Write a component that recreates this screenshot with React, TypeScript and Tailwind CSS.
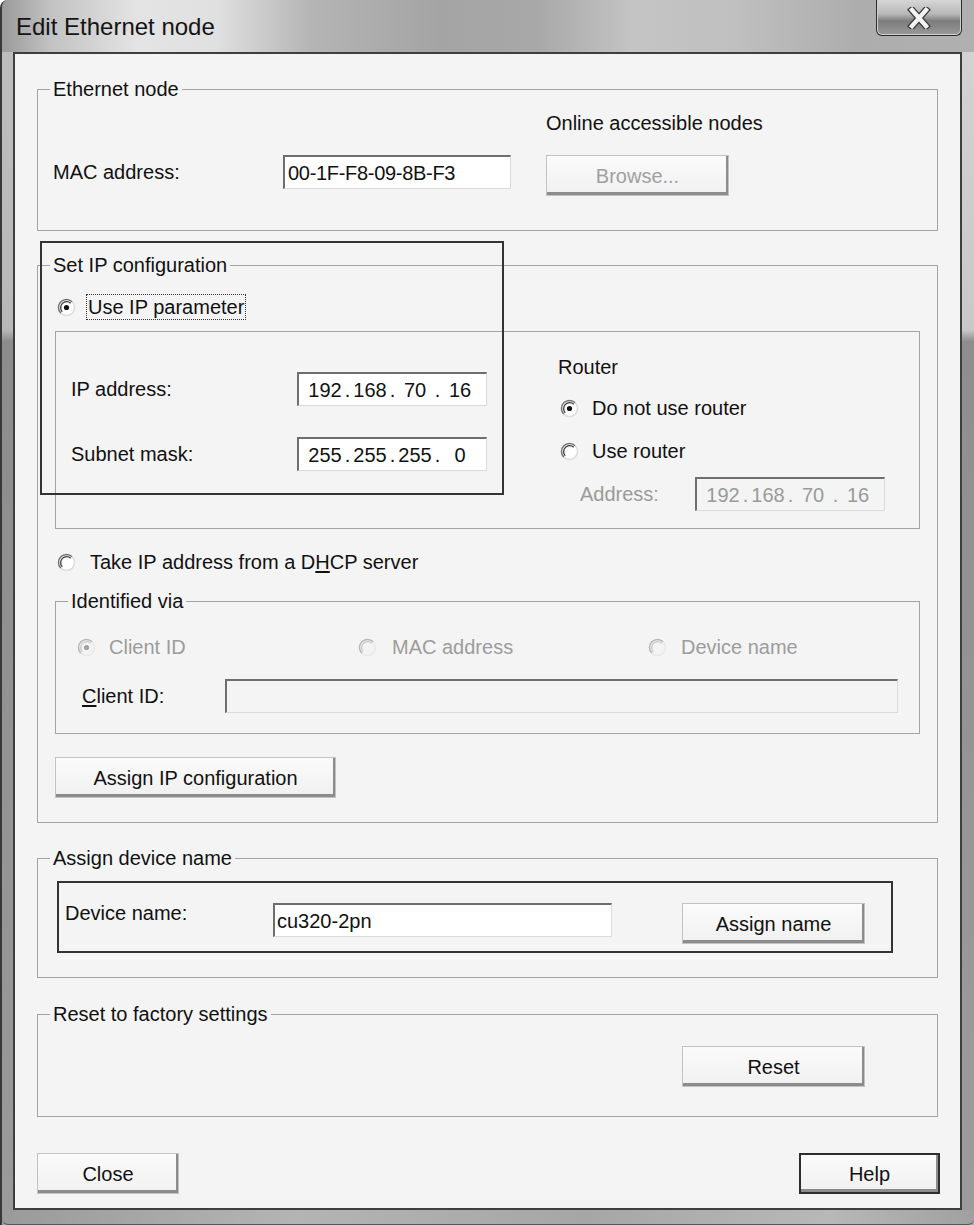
import React from 'react';

// Classic Windows dialog: Edit Ethernet node

type Kids = { children?: React.ReactNode; className?: string };

function Radio({ checked = false, disabled = false }: { checked?: boolean; disabled?: boolean }) {
  const dark = disabled ? '#b6b6b6' : '#707070';
  const darker = disabled ? '#c9c9c9' : '#3a3a3a';
  const light = disabled ? '#e8e8e8' : '#dcdcdc';
  return (
    <svg width="19" height="19" viewBox="0 0 19 19" className="shrink-0">
      <circle cx="9.5" cy="9.5" r="8" fill={disabled ? '#f3f3f3' : '#ffffff'} />
      <path d="M3.84 15.16A8 8 0 0 1 15.16 3.84" fill="none" stroke={dark} strokeWidth="1.5" />
      <path d="M15.16 3.84A8 8 0 0 1 3.84 15.16" fill="none" stroke={light} strokeWidth="1.5" />
      <path d="M5.26 13.74A6 6 0 0 1 13.74 5.26" fill="none" stroke={darker} strokeWidth="1.3" />
      {checked && <circle cx="9.5" cy="9.5" r="2.6" fill={disabled ? '#a2a2a2' : '#111111'} />}
    </svg>
  );
}

function Field({ children, className = '', disabled = false }: Kids & { disabled?: boolean }) {
  return (
    <div
      className={`flex items-center h-[34px] border-t-2 border-l-2 border-r border-b border-t-[#6e6e6e] border-l-[#6e6e6e] border-r-[#dadada] border-b-[#dadada] ${
        disabled ? 'bg-[#f4f4f4] text-[#9a9a9a]' : 'bg-white'
      } ${className}`}
    >
      {children}
    </div>
  );
}

function Ip({ parts }: { parts: string[] }) {
  return (
    <div className="flex items-center pl-[7px]">
      {parts.map((p, i) => (
        <React.Fragment key={i}>
          <span className="w-[38px] text-center">{p}</span>
          {i < 3 && <span className="w-[7px] text-center">.</span>}
        </React.Fragment>
      ))}
    </div>
  );
}

function Btn({ children, className = '', disabled = false, isDefault = false }: Kids & { disabled?: boolean; isDefault?: boolean }) {
  return (
    <div
      className={`flex items-center justify-center h-[41px] bg-[linear-gradient(to_bottom,#fbfbfb,#f0f0f0)] shadow-[inset_-2px_-3px_0_#8c8c8c] ${
        isDefault ? 'border-2 border-[#2e2e2e]' : 'border border-[#c2c2c2]'
      } ${disabled ? 'text-[#a0a0a0]' : ''} ${className}`}
    >
      {children}
    </div>
  );
}

function Group({ label, children, className = '' }: Kids & { label: string }) {
  return (
    <fieldset className={`border border-[#a3a3a3] ${className}`}>
      <legend className="ml-[12px] px-[3px] leading-[22px]">{label}</legend>
      {children}
    </fieldset>
  );
}

export default function App() {
  return (
    <div className="w-[974px] h-[1225px] flex flex-col rounded-t-[8px] border-l-2 border-[#383838] bg-[#a6a6a6] text-[20px] leading-[24px] text-[#111] font-['Liberation_Sans',Arial,sans-serif]">
      {/* title bar */}
      <div className="h-[52px] shrink-0 flex items-start rounded-tl-[8px] bg-[linear-gradient(90deg,#9a9a9a_0%,#c2c2c2_5%,#e4e4e4_14%,#e0e0e0_22%,#b4b4b4_32%,#a4a4a4_45%,#a8a8a8_55%,#c4c4c4_65%,#c0c0c0_75%,#adadad_88%,#b0b0b0_100%)]">
        <div className="pl-[14px] pt-[13px] text-[24px] leading-[28px] text-[#141414]">Edit Ethernet node</div>
        <div className="ml-auto mr-[12px] w-[86px] h-[36px] flex items-center justify-center rounded-b-[6px] border border-t-0 border-[#2c2c2c] bg-[linear-gradient(to_bottom,#d6d6d6_0%,#b8b8b8_40%,#7c7c7c_60%,#9a9a9a_100%)] shadow-[inset_0_-1px_0_#d0d0d0,inset_1px_0_0_#cfcfcf,inset_-1px_0_0_#cfcfcf]">
          <svg width="26" height="22" viewBox="0 0 26 22">
            <path d="M6 3L20 19M20 3L6 19" stroke="#3a3a3a" strokeWidth="7" strokeLinecap="square" />
            <path d="M6 3L20 19M20 3L6 19" stroke="#f4f4f4" strokeWidth="4.4" strokeLinecap="square" />
          </svg>
        </div>
      </div>

      {/* body */}
      <div className="flex h-[1158px] shrink-0">
        <div className="w-[11px] bg-[linear-gradient(to_bottom,#bdbdbd_0%,#b8b8b8_24%,#8c8c8c_25%,#9a9a9a_100%)]" />

        <div className="w-[949px] h-[1158px] relative flex flex-col border-2 border-[#3e3e3e] bg-[#f4f4f4]">
          {/* Ethernet node */}
          <Group label="Ethernet node" className="mt-[24px] mx-[22px]">
            <div className="flex pl-[15px] pb-[34px]">
              <div className="w-[493px] mt-[55px] h-[34px] flex items-center">
                <span className="w-[230px]">MAC address:</span>
                <Field className="w-[228px] pl-[3px] tracking-[-0.3px]">00-1F-F8-09-8B-F3</Field>
              </div>
              <div className="pt-[11px]">
                <div>Online accessible nodes</div>
                <Btn className="mt-[20px] w-[183px]" disabled>
                  Browse...
                </Btn>
              </div>
            </div>
          </Group>

          {/* Set IP configuration */}
          <Group label="Set IP configuration" className="mt-[23px] mx-[22px]">
            <div className="mt-[18px] h-[26px] flex items-center pl-[19px] gap-[10px]">
              <Radio checked />
              <span className="h-[26px] px-[1px] border border-dotted border-[#333]">Use IP parameter</span>
            </div>

            <div className="mt-[11px] mx-[17px] flex border border-[#a3a3a3]">
              <div className="w-[502px] pl-[15px] pt-[40px] flex flex-col gap-[31px]">
                <div className="h-[34px] flex items-center">
                  <span className="w-[226px]">IP address:</span>
                  <Field className="w-[190px]">
                    <Ip parts={['192', '168', '70', '16']} />
                  </Field>
                </div>
                <div className="h-[34px] flex items-center">
                  <span className="w-[226px]">Subnet mask:</span>
                  <Field className="w-[190px]">
                    <Ip parts={['255', '255', '255', '0']} />
                  </Field>
                </div>
              </div>
              <div className="pt-[23px] pb-[17px]">
                <div>Router</div>
                <div className="mt-[16px] h-[26px] flex items-center pl-[2px] gap-[13px]">
                  <Radio checked />
                  <span>Do not use router</span>
                </div>
                <div className="mt-[17px] h-[26px] flex items-center pl-[2px] gap-[13px]">
                  <Radio />
                  <span>Use router</span>
                </div>
                <div className="mt-[13px] flex items-center pl-[22px] text-[#9a9a9a]">
                  <span className="w-[115px]">Address:</span>
                  <Field disabled className="w-[190px]">
                    <Ip parts={['192', '168', '70', '16']} />
                  </Field>
                </div>
              </div>
            </div>

            <div className="mt-[20px] h-[26px] flex items-center pl-[19px] gap-[14px]">
              <Radio />
              <span>
                Take IP address from a D<span className="underline underline-offset-2">H</span>CP server
              </span>
            </div>

            <Group label="Identified via" className="mt-[15px] mx-[17px]">
              <div className="mt-[22px] h-[26px] flex items-center pl-[21px] text-[#9c9c9c]">
                <div className="w-[281px] flex items-center gap-[13px]">
                  <Radio checked disabled />
                  <span>Client ID</span>
                </div>
                <div className="w-[290px] flex items-center gap-[15px]">
                  <Radio disabled />
                  <span>MAC address</span>
                </div>
                <div className="flex items-center gap-[14px]">
                  <Radio disabled />
                  <span>Device name</span>
                </div>
              </div>
              <div className="mt-[19px] mb-[20px] flex items-center pl-[26px]">
                <span className="w-[143px]">
                  <span className="underline underline-offset-2">C</span>lient ID:
                </span>
                <Field disabled className="w-[673px]" />
              </div>
            </Group>

            <div className="mt-[23px] mb-[24px] ml-[17px] flex">
              <Btn className="w-[281px]">Assign IP configuration</Btn>
            </div>
          </Group>

          {/* Assign device name */}
          <Group label="Assign device name" className="mt-[24px] mx-[22px]">
            <div className="mt-[12px] mb-[24px] ml-[19px] w-[836px] flex items-start border-2 border-[#333] pt-[18px] pb-[7px] pl-[6px]">
              <span className="w-[208px]">Device name:</span>
              <Field className="mt-[2px] w-[339px] pl-[2px]">cu320-2pn</Field>
              <Btn className="mt-[2px] ml-[70px] w-[183px]">Assign name</Btn>
            </div>
          </Group>

          {/* Reset */}
          <Group label="Reset to factory settings" className="mt-[25px] mx-[22px]">
            <div className="flex justify-end pr-[72px] pt-[21px] pb-[29px]">
              <Btn className="w-[183px]">Reset</Btn>
            </div>
          </Group>

          <div className="mt-[36px] flex justify-between pl-[22px] pr-[20px]">
            <Btn className="w-[142px]">Close</Btn>
            <Btn className="w-[141px]" isDefault>
              Help
            </Btn>
          </div>

          {/* highlight frame drawn over the screenshot */}
          <div className="absolute left-[25px] top-[187px] w-[464px] h-[254px] border-2 border-[#333] pointer-events-none" />
        </div>

        <div className="w-[12px] bg-[linear-gradient(to_bottom,#d2d2d2_0%,#c8c8c8_24%,#8e8e8e_25%,#9c9c9c_100%)]" />
      </div>

      {/* bottom frame */}
      <div className="h-[15px] shrink-0 rounded-b-[6px] border-b border-[#555] bg-[linear-gradient(90deg,#9a9a9a,#b4b4b4_30%,#a6a6a6_60%,#b8b8b8_85%,#a0a0a0)]" />
    </div>
  );
}
